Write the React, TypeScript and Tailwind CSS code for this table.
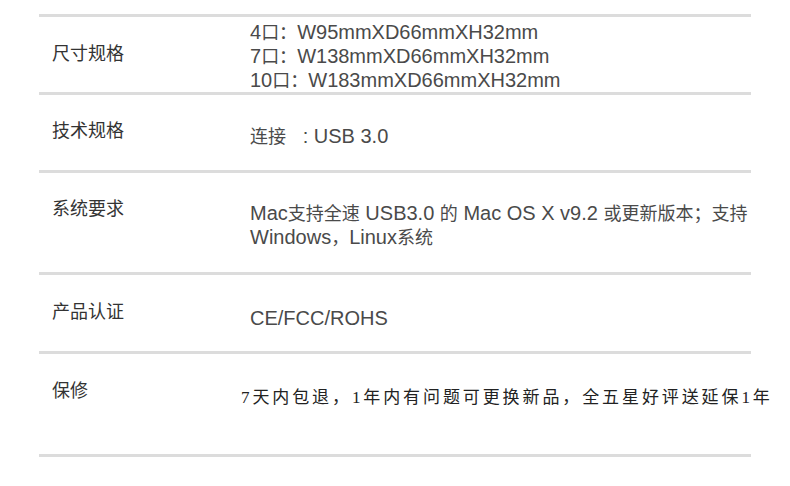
import React from 'react';

const sans = { fontFamily: '"Liberation Sans", "Noto Sans CJK SC", sans-serif' };

type Row = {
    label: string;
    height: string;
    labelPad: string;
    valuePad: string;
    lines: string[];
    serif?: boolean;
};

const rows: Row[] = [
    {
        label: '尺寸规格',
        height: 'h-[78px]',
        labelPad: 'pt-[25px]',
        valuePad: 'pt-[4px]',
        lines: ['4口：W95mmXD66mmXH32mm', '7口：W138mmXD66mmXH32mm', '10口：W183mmXD66mmXH32mm'],
    },
    {
        label: '技术规格',
        height: 'h-[78px]',
        labelPad: 'pt-[24px]',
        valuePad: 'pt-[30px]',
        lines: ['连接\u00a0\u00a0\u00a0:\u00a0USB 3.0'],
    },
    {
        label: '系统要求',
        height: 'h-[102px]',
        labelPad: 'pt-[24px]',
        valuePad: 'pt-[29px]',
        lines: ['Mac支持全速 USB3.0 的 Mac OS X v9.2 或更新版本；支持', 'Windows，Linux系统'],
    },
    {
        label: '产品认证',
        height: 'h-[79px]',
        labelPad: 'pt-[25px]',
        valuePad: 'pt-[32px]',
        lines: ['CE/FCC/ROHS'],
    },
    {
        label: '保修',
        height: 'h-[103px]',
        labelPad: 'pt-[25px]',
        valuePad: 'pt-[32px]',
        lines: ['7天内包退，1年内有问题可更换新品，全五星好评送延保1年'],
        serif: true,
    },
];

// latin runs in the source render wider than the cjk ones, so size them apart
const MixedLine: React.FC<{ text: string }> = ({ text }) => {
    const parts = text.match(/[\u3000-\u9fff\uff00-\uffef]+|[^\u3000-\u9fff\uff00-\uffef]+/g) ?? [];
    return (
        <p className="whitespace-nowrap text-[18px] leading-[23px] text-[#4a4a4a]" style={sans}>
            {parts.map((part, i) =>
                /[\u3000-\u9fff\uff00-\uffef]/.test(part) ? (
                    <span key={i}>{part}</span>
                ) : (
                    <span key={i} className="text-[20px]">{part}</span>
                )
            )}
        </p>
    );
};

const SpecTable: React.FC = () => (
    <div className="w-[712px] ml-[39px] mt-[14px] border-t-[3px] border-[#dcdcdc]">
        {rows.map(row => (
            <div key={row.label} className={`flex ${row.height} border-b-[3px] border-[#dcdcdc]`}>
                <div className={`w-[211px] shrink-0 pl-[13px] ${row.labelPad} text-[18px] leading-[24px] text-[#333]`} style={sans}>
                    {row.label}
                </div>
                <div className={`flex-1 ${row.valuePad}`}>
                    {row.serif ? (
                        <p
                            className="-ml-[9px] whitespace-nowrap text-[17px] leading-[23px] tracking-[2.9px] text-[#222]"
                            style={{ fontFamily: '"Liberation Serif", "Noto Sans CJK SC", serif' }}
                        >
                            {row.lines[0]}
                        </p>
                    ) : (
                        row.lines.map(line => <MixedLine key={line} text={line} />)
                    )}
                </div>
            </div>
        ))}
    </div>
);

export default function App() {
    return (
        <div className="w-[790px] h-[486px] bg-white overflow-hidden">
            <SpecTable />
        </div>
    );
}
